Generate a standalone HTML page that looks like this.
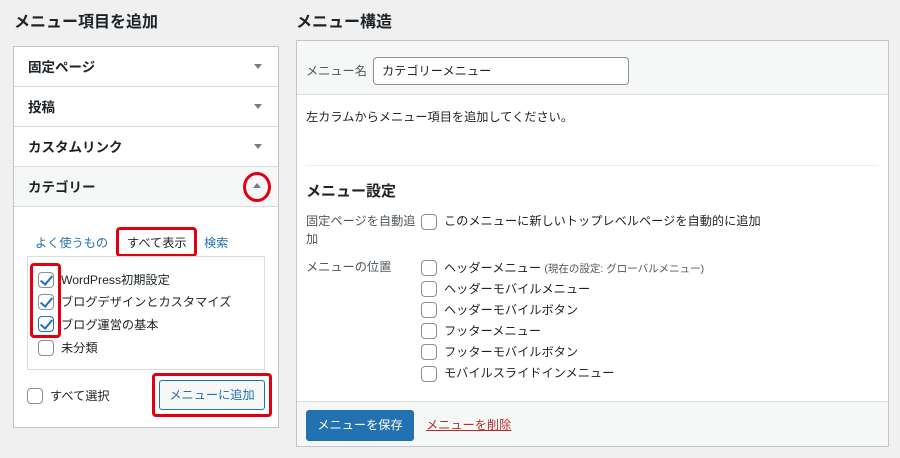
<!DOCTYPE html><html><head><meta charset="utf-8"><style>
*{box-sizing:border-box;margin:0;padding:0}
body{width:900px;height:458px;background:#f0f0f1;font-family:"Liberation Sans","Noto Sans CJK JP",sans-serif;color:#1d2327;position:relative;overflow:hidden;font-size:12.2px;line-height:16px}
.a{position:absolute}
h2{position:absolute;font-size:16px;font-weight:bold;line-height:20px}
.cb{position:absolute;width:16px;height:16px;border:1px solid #8c8f94;border-radius:4px;background:#fff}
.cb.on::after{content:"";position:absolute;left:4px;top:0px;width:5px;height:10px;border:solid #2271b1;border-width:0 2px 2px 0;transform:rotate(40deg)}
.red{position:absolute;border:3px solid #e00010;border-radius:4px}
.sec{position:absolute;left:14px;width:264px;height:40px;border-bottom:1px solid #dcdcde;background:#fff;font-weight:bold;font-size:13.5px;padding:13px 0 0 14px}
.tri{position:absolute;right:16px;top:17px;width:0;height:0;border-left:4px solid transparent;border-right:4px solid transparent;border-top:5px solid #787c82}
.t{position:absolute;white-space:nowrap}
</style></head><body>
<h2 style="left:14px;top:13px">メニュー項目を追加</h2>
<h2 style="left:296px;top:13px">メニュー構造</h2>
<div class="a" style="left:13px;top:46px;width:266px;height:382px;border:1px solid #c3c4c7;background:#fff"></div>
<div class="sec" style="top:47px">固定ページ<div class="tri"></div></div>
<div class="sec" style="top:87px">投稿<div class="tri"></div></div>
<div class="sec" style="top:127px">カスタムリンク<div class="tri"></div></div>
<div class="sec" style="top:167px;background:#f6f7f7">カテゴリー<div class="tri" style="border-top:0;border-bottom:5px solid #787c82;top:16px;right:17px"></div></div>
<div class="a" style="left:243px;top:172px;width:28px;height:30px;border:3px solid #e00010;border-radius:50%"></div>
<div class="t" style="left:35px;top:235px;color:#2271b1">よく使うもの</div>
<div class="t" style="left:127px;top:235px">すべて表示</div>
<div class="t" style="left:204px;top:235px;color:#2271b1">検索</div>
<div class="red" style="left:116px;top:227px;width:81px;height:30px"></div>
<div class="a" style="left:27px;top:256px;width:238px;height:114px;border:1px solid #dcdcde"></div>
<div class="cb on" style="left:38px;top:272px"></div><div class="t" style="left:61px;top:272px">WordPress初期設定</div>
<div class="cb on" style="left:38px;top:294px"></div><div class="t" style="left:61px;top:294px">ブログデザインとカスタマイズ</div>
<div class="cb on" style="left:38px;top:316px;border-color:#2271b1"></div><div class="t" style="left:61px;top:317px">ブログ運営の基本</div>
<div class="cb" style="left:38px;top:340px"></div><div class="t" style="left:61px;top:340px">未分類</div>
<div class="red" style="left:30px;top:263px;width:31px;height:75px"></div>
<div class="cb" style="left:27px;top:388px"></div><div class="t" style="left:50px;top:388px">すべて選択</div>
<div class="a" style="left:159px;top:380px;width:106px;height:30px;border:1px solid #2271b1;border-radius:3px;background:#f6f7f7;color:#2271b1;text-align:center;line-height:28px">メニューに追加</div>
<div class="red" style="left:152px;top:373px;width:120px;height:44px"></div>

<div class="a" style="left:296px;top:40px;width:593px;height:407px;border:1px solid #c3c4c7;background:#fff"></div>
<div class="a" style="left:297px;top:41px;width:591px;height:54px;background:#f6f7f7;border-bottom:1px solid #dcdcde"></div>
<div class="t" style="left:306px;top:63px;color:#50575e">メニュー名</div>
<div class="a" style="left:373px;top:57px;width:256px;height:28px;border:1px solid #8c8f94;border-radius:4px;background:#fff;padding:5px 8px">カテゴリーメニュー</div>
<div class="t" style="left:306px;top:109px">左カラムからメニュー項目を追加してください。</div>
<div class="a" style="left:306px;top:165px;width:572px;height:1px;background:#f0f0f1"></div>
<div class="t" style="left:306px;top:182px;font-size:15px;font-weight:bold;line-height:20px">メニュー設定</div>
<div class="t" style="left:306px;top:212px;color:#50575e;line-height:18px;white-space:normal;width:114px">固定ページを自動追加</div>
<div class="cb" style="left:421px;top:214px"></div><div class="t" style="left:444px;top:213px">このメニューに新しいトップレベルページを自動的に追加</div>
<div class="t" style="left:306px;top:259px;color:#50575e">メニューの位置</div>
<div class="cb" style="left:421px;top:260px"></div><div class="t" style="left:444px;top:260px">ヘッダーメニュー <span style="font-size:10.5px;color:#50575e">(現在の設定: グローバルメニュー)</span></div>
<div class="cb" style="left:421px;top:281px"></div><div class="t" style="left:444px;top:281px">ヘッダーモバイルメニュー</div>
<div class="cb" style="left:421px;top:302px"></div><div class="t" style="left:444px;top:302px">ヘッダーモバイルボタン</div>
<div class="cb" style="left:421px;top:323px"></div><div class="t" style="left:444px;top:323px">フッターメニュー</div>
<div class="cb" style="left:421px;top:344px"></div><div class="t" style="left:444px;top:344px">フッターモバイルボタン</div>
<div class="cb" style="left:421px;top:366px"></div><div class="t" style="left:444px;top:365px">モバイルスライドインメニュー</div>
<div class="a" style="left:297px;top:401px;width:591px;height:45px;background:#f6f7f7;border-top:1px solid #dcdcde"></div>
<div class="a" style="left:306px;top:410px;width:108px;height:31px;background:#2271b1;border-radius:3px;color:#fff;text-align:center;line-height:31px">メニューを保存</div>
<div class="t" style="left:426px;top:417px;color:#b32d2e;text-decoration:underline">メニューを削除</div>
</body></html>
